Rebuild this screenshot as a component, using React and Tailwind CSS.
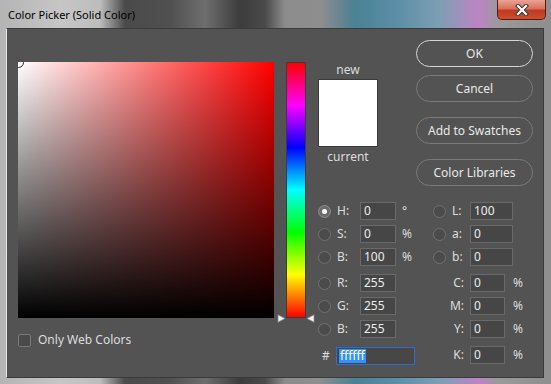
import React from "react";

const font = "font-['Noto_Sans','Open_Sans',sans-serif]";

function Radio({ checked }) {
  return checked ? (
    <div className="w-[13px] h-[13px] rounded-full border border-[#8e8e8e] bg-[#6c6c6c] flex items-center justify-center shrink-0">
      <div className="w-[5px] h-[5px] rounded-full bg-white" />
    </div>
  ) : (
    <div className="w-[13px] h-[13px] rounded-full border border-[#717171] bg-[#4b4b4b] shrink-0" />
  );
}

function Input({ value, w }) {
  return (
    <div
      className={`${w} h-[18px] border border-[#6a6a6a] bg-[#464646] text-[#ececec] text-[12px] leading-[16px] pl-[3px] shrink-0`}
    >
      {value}
    </div>
  );
}

function LeftField({ label, value, unit, checked }) {
  return (
    <div className="w-[115px] flex items-center shrink-0">
      <Radio checked={checked} />
      <div className="ml-[6px] w-[23px] text-[12px] text-[#dcdcdc]">{label}</div>
      <Input value={value} w="w-[36px]" />
      <div className="ml-[6px] text-[12px] text-[#dcdcdc]">{unit}</div>
    </div>
  );
}

function LabField({ label, value }) {
  return (
    <div className="flex items-center">
      <Radio />
      <div className="ml-[6px] w-[18px] text-[12px] text-[#dcdcdc]">{label}</div>
      <Input value={value} w="w-[43px]" />
    </div>
  );
}

function CmykField({ label, value }) {
  return (
    <div className="flex items-center">
      <div className="w-[31px] text-right text-[12px] text-[#dcdcdc]">{label}</div>
      <div className="ml-[6px]">
        <Input value={value} w="w-[35px]" />
      </div>
      <div className="ml-[8px] text-[12px] text-[#dcdcdc]">%</div>
    </div>
  );
}

function Btn({ children, primary, className = "" }) {
  return (
    <div
      className={`h-[27px] rounded-full border ${
        primary ? "border-[#d6d6d6]" : "border-[#7a7a7a]"
      } flex items-center justify-center text-[12px] text-[#e8e8e8] ${className}`}
    >
      {children}
    </div>
  );
}

export default function App() {
  return (
    <div
      className={`${font} w-[551px] h-[384px] overflow-hidden flex flex-col bg-[linear-gradient(to_right,#b4b4b4_0px,#c6c6c6_60px,#bdbdbd_100px,#4a4a4a_125px,#505050_170px,#6e6e6e_205px,#3c3c3c_240px,#4a4a4a_265px,#8c8c8c_285px,#8e8e8e_320px,#4a8194_355px,#5a8ea6_395px,#7d9fb4_440px,#bd84c4_478px,#9a9a9a_500px,#8e8e8e_551px)]`}
    >
      {/* Title bar */}
      <div className="h-[28px] flex items-start shrink-0">
        <div className="pl-[8px] pt-[7px] text-[11px] leading-[16px] text-black">
          Color Picker (Solid Color)
        </div>
        <div className="ml-auto mr-[5px] w-[49px] h-[20px] rounded-b-[5px] border border-t-0 border-[#5a1a12] bg-[linear-gradient(to_bottom,#e9a394_0%,#d8715c_45%,#c0391f_55%,#c8502f_100%)] flex items-center justify-center">
          <svg width="14" height="12" viewBox="0 0 14 12">
            <path d="M3 2 L11 10 M11 2 L3 10" stroke="#3a3a3a" strokeWidth="4.2" strokeLinecap="square" />
            <path d="M3 2 L11 10 M11 2 L3 10" stroke="#ffffff" strokeWidth="2.2" strokeLinecap="square" />
          </svg>
        </div>
      </div>

      {/* Client area */}
      <div className="ml-[6px] w-[538px] h-[350px] border border-[#3a3a3a] border-l-[#e6e6e6] bg-[#535353] flex shrink-0">
        {/* Left column */}
        <div className="pl-[11px] pt-[33px] flex flex-col">
          <div className="relative w-[256px] h-[256px] overflow-hidden bg-[linear-gradient(to_right,#ffffff,#ff0000)]">
            <div className="w-full h-full bg-[linear-gradient(to_top,#000000,rgba(0,0,0,0))]" />
            <div className="absolute -left-[5px] -top-[5px] w-[11px] h-[11px] rounded-full border border-[#222]" />
          </div>
          <div className="mt-[15px] flex items-center">
            <div className="w-[13px] h-[13px] rounded-[2px] border border-[#797979] bg-[#4a4a4a]" />
            <div className="ml-[7px] text-[12px] leading-[14px] text-[#dcdcdc]">Only Web Colors</div>
          </div>
        </div>

        {/* Hue column */}
        <div className="ml-[12px] pt-[33px]">
          <div className="relative w-[20px] h-[256px] border border-[#3c3c3c] bg-[linear-gradient(to_bottom,#ff0000_0%,#ff00ff_16.67%,#0000ff_33.33%,#00ffff_50%,#00ff00_66.67%,#ffff00_83.33%,#ff0000_100%)]">
            <svg className="absolute left-[-10px] top-[251px]" width="9" height="9" viewBox="0 0 9 9">
              <path d="M1 0.8 L8 4.5 L1 8.2 Z" fill="#f4f4f4" stroke="#8a8a8a" strokeWidth="0.8" />
            </svg>
            <svg className="absolute left-[19px] top-[251px]" width="9" height="9" viewBox="0 0 9 9">
              <path d="M8 0.8 L1 4.5 L8 8.2 Z" fill="#f4f4f4" stroke="#8a8a8a" strokeWidth="0.8" />
            </svg>
          </div>
        </div>

        {/* Right area */}
        <div className="ml-[12px] flex flex-col">
          <div className="h-[173px] flex">
            <div className="w-[60px] pt-[33px] flex flex-col items-center">
              <div className="text-[12px] leading-[16px] text-[#dcdcdc]">new</div>
              <div className="mt-[1px] w-[60px] h-[68px] bg-white border border-[#3a3a3a]" />
              <div className="mt-[2px] text-[12px] leading-[16px] text-[#dcdcdc]">current</div>
            </div>
            <div className="ml-[38px] pt-[11px] w-[117px] flex flex-col">
              <Btn primary>OK</Btn>
              <Btn className="mt-[8px]">Cancel</Btn>
              <Btn className="mt-[15px]">Add to Swatches</Btn>
              <Btn className="mt-[15px]">Color Libraries</Btn>
            </div>
          </div>

          <div className="flex flex-col">
            <div className="h-[18px] flex items-center">
              <LeftField label="H:" value="0" unit="°" checked />
              <LabField label="L:" value="100" />
            </div>
            <div className="mt-[5px] h-[18px] flex items-center">
              <LeftField label="S:" value="0" unit="%" />
              <LabField label="a:" value="0" />
            </div>
            <div className="mt-[5px] h-[18px] flex items-center">
              <LeftField label="B:" value="100" unit="%" />
              <LabField label="b:" value="0" />
            </div>
            <div className="mt-[8px] h-[18px] flex items-center">
              <LeftField label="R:" value="255" unit="" />
              <CmykField label="C:" value="0" />
            </div>
            <div className="mt-[5px] h-[18px] flex items-center">
              <LeftField label="G:" value="255" unit="" />
              <CmykField label="M:" value="0" />
            </div>
            <div className="mt-[5px] h-[18px] flex items-center">
              <LeftField label="B:" value="255" unit="" />
              <CmykField label="Y:" value="0" />
            </div>
            <div className="mt-[9px] h-[18px] flex items-center">
              <div className="w-[115px] flex items-center shrink-0">
                <div className="pl-[4px] w-[18px] text-[12px] text-[#dcdcdc]">#</div>
                <div className="w-[79px] h-[18px] border border-[#2a6fd0] bg-[#474747] pl-[2px] flex items-center">
                  <span className="bg-[#3390ff] text-white text-[12px] leading-[14px] px-[1px]">ffffff</span>
                </div>
              </div>
              <div className="-mt-[3px]">
                <CmykField label="K:" value="0" />
              </div>
            </div>
          </div>
        </div>
      </div>
    </div>
  );
}
